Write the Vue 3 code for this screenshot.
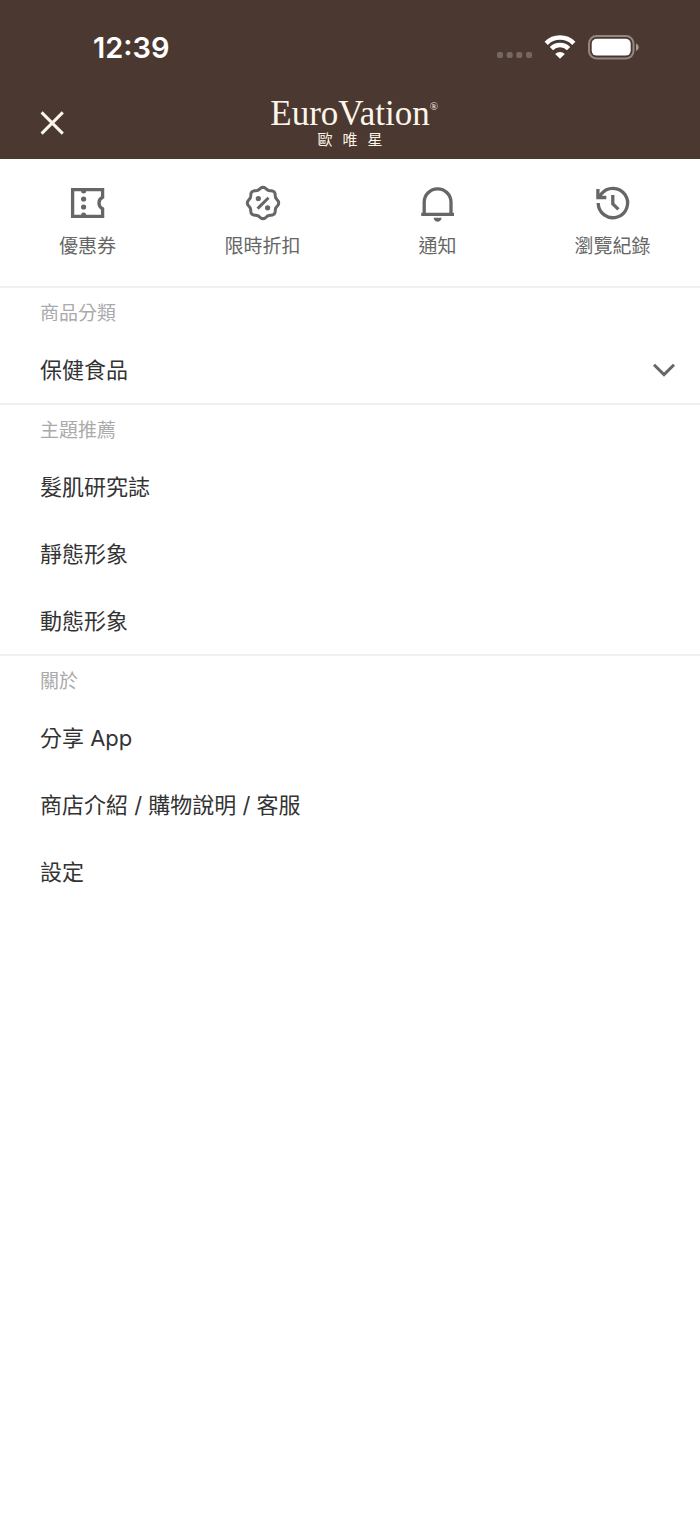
<template>
  <div class="page">
    <header class="header">
      <div class="status-bar">
        <time class="clock">12:39</time>
        <div class="status-icons">
          <svg width="36" height="28" viewBox="0 0 36 28" fill="#fff" fill-opacity=".24">
            <rect x="1" y="18" width="6" height="6" rx="2" />
            <rect x="10.7" y="18" width="6" height="6" rx="2" />
            <rect x="20.3" y="18" width="6" height="6" rx="2" />
            <rect x="30" y="18" width="6" height="6" rx="2" />
          </svg>
          <svg width="32" height="28" viewBox="0 0 32 28" fill="none" stroke="#fff" stroke-width="4.6">
            <path d="M2.2 9.3a19.4 19.4 0 0 1 27.6 0" />
            <path d="M7.4 14.6a12.2 12.2 0 0 1 17.2 0" />
            <path d="M16 24.8l-4.8-4.8a6.9 6.9 0 0 1 9.6 0z" fill="#fff" stroke="none" />
          </svg>
          <svg width="52" height="28" viewBox="0 0 52 28" fill="none">
            <rect x="1" y="2" width="44.5" height="22.5" rx="7.5" stroke="#fff" stroke-opacity=".4" stroke-width="2" />
            <rect x="3.7" y="4.8" width="39" height="16.8" rx="5" fill="#fff" />
            <path d="M48 9.5c3.6 1.4 3.6 6.1 0 7.5z" fill="#fff" fill-opacity=".5" />
          </svg>
        </div>
      </div>
      <div class="nav-bar">
        <button class="close" type="button" aria-label="Close">
          <svg width="28" height="28" viewBox="0 0 28 28" fill="none" stroke="#fbf6e9" stroke-width="3">
            <path d="M3.6 3.4l21.2 21.2M24.8 3.4L3.6 24.6" />
          </svg>
        </button>
        <div class="logo">
          <div class="logo-name">EuroVation<span class="logo-mark">®</span></div>
          <div class="logo-sub"><span>歐</span><span>唯</span><span>星</span></div>
        </div>
      </div>
    </header>

    <nav class="shortcuts">
      <a v-for="item in shortcuts" :key="item.label" class="shortcut" href="#">
        <svg width="40" height="40" viewBox="0 0 40 40" fill="none" stroke="#666" stroke-width="3.3">
          <template v-if="item.icon === 'coupon'">
            <path d="M4.6 6.7h30v7.6a6.3 6.3 0 0 0 0 11.4v7.6h-30z" />
            <g fill="#666" stroke="none">
              <circle cx="15.6" cy="8" r="2.5" />
              <circle cx="15.6" cy="16" r="2.6" />
              <circle cx="15.6" cy="24" r="2.6" />
              <circle cx="15.6" cy="32" r="2.5" />
            </g>
          </template>
          <template v-else-if="item.icon === 'discount'">
            <path :d="sealPath" stroke-width="3" stroke-linejoin="round" />
            <path d="M14.6 25.6l10.9-10.9" stroke-width="3" />
            <circle cx="15.3" cy="15.5" r="2.6" fill="#666" stroke="none" />
            <circle cx="24.6" cy="24.8" r="2.6" fill="#666" stroke="none" />
          </template>
          <template v-else-if="item.icon === 'bell'">
            <path d="M6.2 31V19.2a13.4 13.4 0 0 1 26.8 0V31" />
            <path d="M3.2 31.4h32.8" />
            <path d="M15.6 34.8h8c-.6 5.2-7.4 5.2-8 0z" fill="#666" stroke="none" />
          </template>
          <template v-else>
            <path d="M5.2 20a14.7 14.7 0 1 0 3-8.9L5.4 14.4" />
            <path d="M4.9 6v8.5h8.4" />
            <path d="M19.8 12v8.8l5.6 5.6" />
          </template>
        </svg>
        <span>{{ item.label }}</span>
      </a>
    </nav>

    <section v-for="section in sections" :key="section.title" class="section">
      <h2>{{ section.title }}</h2>
      <ul>
        <li v-for="item in section.items" :key="item">
          <button v-if="section.expandable" class="row" type="button" aria-expanded="false">
            <span>{{ item }}</span>
            <svg width="24" height="24" viewBox="0 0 24 24" fill="none" stroke="#666" stroke-width="3">
              <path d="M2 6.8l10 9.8 10-9.8" />
            </svg>
          </button>
          <a v-else class="row" href="#">{{ item }}</a>
        </li>
      </ul>
    </section>
  </div>
</template>

<script setup>
const shortcuts = [
  { icon: 'coupon', label: '優惠券' },
  { icon: 'discount', label: '限時折扣' },
  { icon: 'bell', label: '通知' },
  { icon: 'history', label: '瀏覽紀錄' }
];

const sections = [
  { title: '商品分類', items: ['保健食品'], expandable: true },
  { title: '主題推薦', items: ['髮肌研究誌', '靜態形象', '動態形象'] },
  { title: '關於', items: ['分享 App', '商店介紹 / 購物說明 / 客服', '設定'] }
];

// Scalloped outline with eight lobes
const sealPoints = [];
for (let i = 0; i < 96; i++) {
  const angle = (i / 96) * Math.PI * 2;
  const radius = 14.7 + Math.cos(angle * 8);
  sealPoints.push(`${(20 + radius * Math.cos(angle)).toFixed(2)} ${(20 + radius * Math.sin(angle)).toFixed(2)}`);
}
const sealPath = `M${sealPoints.join('L')}z`;
</script>

<style>
body {
  margin: 0;
  background: #fff;
}
</style>

<style scoped>
.page {
  font-family: Inter, "Noto Sans CJK TC", sans-serif;
  color: #333;
}

.page svg {
  display: block;
  flex: none;
}

.header {
  background: #4b3831;
}

.status-bar {
  display: flex;
  justify-content: space-between;
  align-items: center;
  height: 80px;
  padding: 8px 60px 0 93px;
}

.clock {
  color: #fff;
  font-size: 29px;
  font-weight: 600;
  line-height: 36px;
}

.status-icons {
  display: flex;
  gap: 12px;
}

.nav-bar {
  display: grid;
  grid-template-columns: 1fr auto 1fr;
  align-items: center;
  box-sizing: border-box;
  height: 71px;
  padding: 0 38px 2px;
}

.close {
  justify-self: start;
  padding: 0;
  border: 0;
  background: none;
  cursor: pointer;
}

.logo {
  color: #fbf6e9;
  font-family: "Liberation Serif", "Noto Sans CJK TC", serif;
}

.logo-name {
  position: relative;
  font-size: 35px;
  line-height: 34px;
}

.logo-mark {
  position: absolute;
  top: 4px;
  left: 100%;
  font-size: 11px;
  line-height: 11px;
}

.logo-sub {
  display: flex;
  justify-content: center;
  gap: 10px;
  margin-top: 1px;
  font-size: 15px;
  line-height: 16px;
}

.shortcuts {
  display: grid;
  grid-template-columns: repeat(4, 1fr);
  padding: 24px 0 27px;
}

.shortcut {
  display: flex;
  flex-direction: column;
  align-items: center;
  gap: 12px;
  color: #666;
  font-size: 19px;
  line-height: 24px;
  text-decoration: none;
}

.section {
  border-top: 2px solid #f0f0f0;
}

.section h2 {
  margin: 0;
  padding: 14px 40px 10px;
  color: #aaa;
  font-size: 19px;
  font-weight: 400;
  line-height: 24px;
}

.section ul {
  margin: 0;
  padding: 0;
  list-style: none;
}

.row {
  display: flex;
  justify-content: space-between;
  align-items: center;
  box-sizing: border-box;
  width: 100%;
  height: 67px;
  padding: 0 24px 0 40px;
  border: 0;
  background: none;
  color: #333;
  font-family: inherit;
  font-size: 22px;
  line-height: 32px;
  text-align: left;
  text-decoration: none;
  cursor: pointer;
}
</style>
